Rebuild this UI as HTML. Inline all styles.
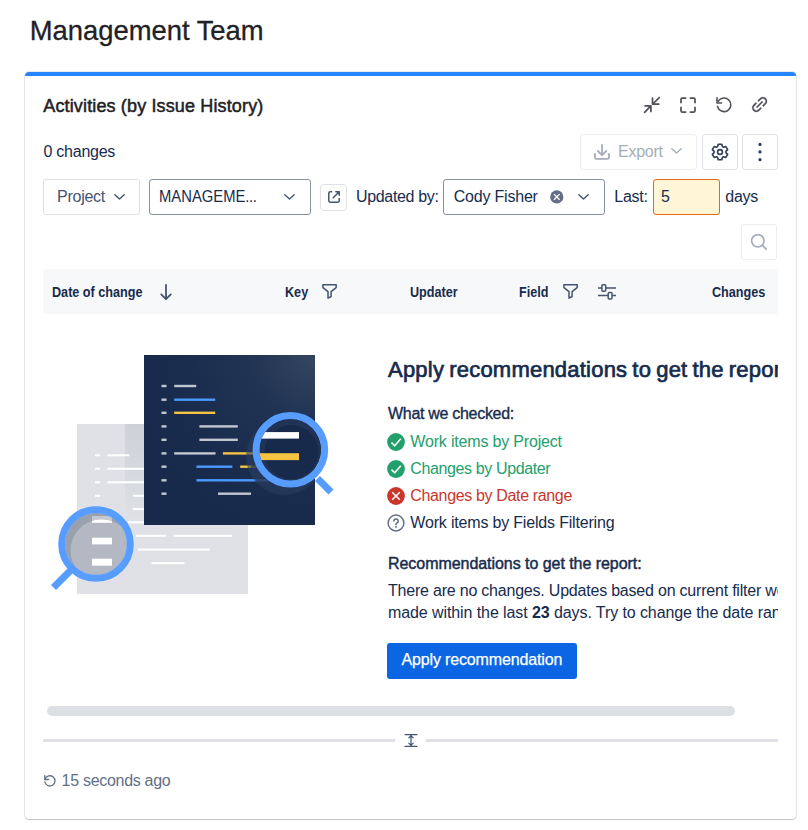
<!DOCTYPE html>
<html><head><meta charset="utf-8">
<style>
*{margin:0;padding:0;box-sizing:border-box}
html,body{width:808px;height:830px;background:#fff;overflow:hidden;font-family:"Liberation Sans",sans-serif;color:#172B4D}
.a{position:absolute;white-space:nowrap;line-height:1}
.card{position:absolute;left:25px;top:72px;width:771px;height:747px;border-radius:4px;background:#fff;
 box-shadow:0 0 0 1px rgba(0,0,0,.085),0 1px 1px rgba(0,0,0,.16)}
.topbar{position:absolute;left:25px;top:72px;width:771px;height:4px;background:#2684FF;border-radius:4px 4px 0 0}
.btn{position:absolute;border:1px solid #DFE1E6;border-radius:3px;background:#fff}
.t16{font-size:16px;letter-spacing:-0.25px}
.med{-webkit-text-stroke:0.35px currentColor}
.th{font-size:13.8px;font-weight:bold;transform:scaleX(.915);transform-origin:0 0;top:286.4px}
.h22{-webkit-text-stroke:0.7px currentColor}
svg{position:absolute;overflow:visible}
</style></head><body>

<div class="a" style="left:29.7px;top:17.2px;font-size:27.4px;color:#1f2126;-webkit-text-stroke:0.3px #1f2126">Management Team</div>

<div class="card"></div>
<div class="topbar"></div>

<div class="a" style="left:43.3px;top:97.1px;font-size:18px;color:#1f2126;letter-spacing:0.14px;-webkit-text-stroke:0.5px #1f2126">Activities (by Issue History)</div>

<!-- header icons -->
<svg style="left:644px;top:97px" width="16" height="16" viewBox="0 0 16 16" fill="none" stroke="#505258" stroke-width="1.75" stroke-linecap="round" stroke-linejoin="round">
 <path d="M15.2 0.6L9.3 6.5M8.5 1V7H14.8"/>
 <path d="M0.6 15.3L6.3 9.4M1.1 8.9H6.9V14.6"/>
</svg>
<svg style="left:680px;top:97px" width="16" height="16" viewBox="0 0 16 16" fill="none" stroke="#505258" stroke-width="1.75" stroke-linecap="round" stroke-linejoin="round">
 <path d="M1 5.6V2.2Q1 1 2.2 1H5.6M10.4 1H13.8Q15 1 15 2.2V5.6M15 10.4V13.8Q15 15 13.8 15H10.4M5.6 15H2.2Q1 15 1 13.8V10.4"/>
</svg>
<svg style="left:716px;top:97px" width="16" height="16" viewBox="0 0 16 16" fill="none" stroke="#505258" stroke-width="1.6" stroke-linecap="round" stroke-linejoin="round">
 <path d="M2.16 4.4A6.8 6.8 0 1 1 1.48 9.56"/>
 <path d="M1 0.8V6H5.5"/>
</svg>
<svg style="left:752px;top:97px" width="16" height="16" viewBox="0 0 16 16" fill="#505258" stroke="#505258" stroke-width="0.15">
 <path transform="translate(7.6 7.5) scale(1.08) translate(-8 -8)" d="M8.22 2.22a3.932 3.932 0 1 1 5.56 5.56l-2.25 2.25-1.06-1.06 2.25-2.25a2.432 2.432 0 0 0-3.44-3.44L7.03 5.53 5.97 4.47zm3.06 3.56-5.5 5.5-1.06-1.06 5.5-5.5zM2.22 8.22l2.25-2.25 1.06 1.06-2.25 2.25a2.432 2.432 0 0 0 3.44 3.44l2.25-2.25 1.06 1.06-2.25 2.25a3.932 3.932 0 1 1-5.56-5.56"/>
</svg>

<div class="a t16" style="left:43.5px;top:144.1px">0 changes</div>

<!-- export / gear / kebab -->
<div class="btn" style="left:580px;top:134px;width:117px;height:36px;border-color:#EBECF0"></div>
<svg style="left:594px;top:144px" width="16" height="16" viewBox="0 0 16 16" fill="none" stroke="#A5ADBA" stroke-width="1.8" stroke-linecap="round" stroke-linejoin="round">
 <path d="M8 0.8V11.2M3.8 7L8 11.2L12.2 7"/>
 <path d="M1 9.8V13.2Q1 14.8 2.6 14.8H13.4Q15 14.8 15 13.2V9.8"/>
</svg>
<div class="a t16" style="left:618px;top:143.8px;color:#A5ADBA">Export</div>
<svg style="left:671px;top:148px" width="11" height="6" viewBox="0 0 11 6" fill="none" stroke="#A5ADBA" stroke-width="1.4" stroke-linecap="round" stroke-linejoin="round"><path d="M0.8 0.8L5.5 5L10.2 0.8"/></svg>

<div class="btn" style="left:702px;top:134px;width:36px;height:36px"></div>
<svg style="left:710.9px;top:142.9px" width="18" height="18" viewBox="0 0 18 18" fill="none" stroke="#2C3E5D" stroke-width="1.6" stroke-linejoin="round">
 <path d="M6.60 3.61 L7.20 1.21 L10.80 1.21 L11.40 3.61 L12.47 4.23 L14.85 3.54 L16.65 6.66 L14.87 8.38 L14.87 9.62 L16.65 11.34 L14.85 14.46 L12.47 13.77 L11.40 14.39 L10.80 16.79 L7.20 16.79 L6.60 14.39 L5.53 13.77 L3.15 14.46 L1.35 11.34 L3.13 9.62 L3.13 8.38 L1.35 6.66 L3.15 3.54 L5.53 4.23Z"/>
 <circle cx="9" cy="9" r="2.4"/>
</svg>
<div class="btn" style="left:742px;top:134px;width:36px;height:36px"></div>
<svg style="left:757px;top:142px" width="6" height="20" viewBox="0 0 6 20" fill="#2C3E5D">
 <circle cx="3" cy="2.4" r="1.6"/><circle cx="3" cy="9.9" r="1.6"/><circle cx="3" cy="17.7" r="1.6"/>
</svg>

<!-- filters row -->
<div class="btn" style="left:43px;top:179px;width:97px;height:36px"></div>
<div class="a t16" style="left:57px;top:188.7px;color:#44546F">Project</div>
<svg style="left:114px;top:194px" width="11" height="6" viewBox="0 0 11 6" fill="none" stroke="#44546F" stroke-width="1.4" stroke-linecap="round" stroke-linejoin="round"><path d="M0.8 0.8L5.5 5L10.2 0.8"/></svg>

<div class="btn" style="left:149px;top:179px;width:162px;height:36px;border-color:#8590A2"></div>
<div class="a t16" style="left:159.3px;top:188.7px;letter-spacing:0;transform:scaleX(0.925);transform-origin:0 0">MANAGEME<span style="letter-spacing:-0.5px">...</span></div>
<svg style="left:284.3px;top:194px" width="11" height="6" viewBox="0 0 11 6" fill="none" stroke="#44546F" stroke-width="1.4" stroke-linecap="round" stroke-linejoin="round"><path d="M0.8 0.8L5.5 5L10.2 0.8"/></svg>

<div class="btn" style="left:320px;top:184px;width:27px;height:27px;border-radius:4px"></div>
<svg style="left:328px;top:191px" width="12" height="12" viewBox="0 0 12 12" fill="none" stroke="#44546F" stroke-width="1.5" stroke-linecap="round" stroke-linejoin="round">
 <path d="M3.6 0.8H2.2Q0.8 0.8 0.8 2.2V9.8Q0.8 11.2 2.2 11.2H9.8Q11.2 11.2 11.2 9.8V7.5"/>
 <path d="M5.2 6.8L11.2 0.8M7.8 0.8H11.2V4.2"/>
</svg>

<div class="a t16" style="left:356px;top:188.7px;letter-spacing:-0.33px">Updated by:</div>

<div class="btn" style="left:443px;top:179px;width:162px;height:36px;border-color:#8590A2"></div>
<div class="a t16" style="left:453.7px;top:188.7px;letter-spacing:-0.2px">Cody Fisher</div>
<svg style="left:550px;top:190px" width="14" height="14" viewBox="0 0 14 14">
 <circle cx="6.8" cy="6.9" r="6.6" fill="#626F86"/>
 <path d="M4 4.1L9.6 9.7M9.6 4.1L4 9.7" stroke="#fff" stroke-width="1.3"/>
</svg>
<svg style="left:578px;top:194px" width="11" height="6" viewBox="0 0 11 6" fill="none" stroke="#44546F" stroke-width="1.4" stroke-linecap="round" stroke-linejoin="round"><path d="M0.8 0.8L5.5 5L10.2 0.8"/></svg>

<div class="a t16" style="left:614.3px;top:188.7px">Last:</div>
<div class="btn" style="left:653px;top:179px;width:67px;height:36px;border-color:#E56910;background:#FFF6D8"></div>
<div class="a t16" style="left:661px;top:188.7px">5</div>
<div class="a t16" style="left:725.3px;top:188.7px">days</div>

<div class="btn" style="left:741px;top:224px;width:36px;height:36px;border-color:#EDEEF1"></div>
<svg style="left:750px;top:233px" width="18" height="18" viewBox="0 0 18 18" fill="none" stroke="#A5ADBA" stroke-width="1.7" stroke-linecap="round">
 <circle cx="7.8" cy="7.8" r="6.2"/><path d="M12.3 12.3L16.2 16.2"/>
</svg>

<!-- table header -->
<div style="position:absolute;left:43px;top:269px;width:735px;height:45px;background:#F7F8F9;border-radius:3px"></div>
<div class="a th" style="left:52.4px">Date of change</div>
<svg style="left:159px;top:283px" width="14" height="18" viewBox="0 0 14 18" fill="none" stroke="#44546F" stroke-width="1.8" stroke-linecap="round" stroke-linejoin="round">
 <path d="M7 1.9V16.2M2.2 11.4L7 16.2L11.8 11.4"/>
</svg>
<div class="a th" style="left:285px">Key</div>
<svg style="left:322px;top:284px" width="15" height="15" viewBox="0 0 15 15" fill="none" stroke="#44546F" stroke-width="1.5" stroke-linejoin="round">
 <path d="M0.9 0.8H14.2V3.2Q14.2 3.6 13.8 3.9L9.1 7.7V12.5L6 14.2V7.7L1.3 3.9Q0.9 3.6 0.9 3.2Z"/>
</svg>
<div class="a th" style="left:410px">Updater</div>
<div class="a th" style="left:519.3px">Field</div>
<svg style="left:563px;top:284px" width="15" height="15" viewBox="0 0 15 15" fill="none" stroke="#44546F" stroke-width="1.5" stroke-linejoin="round">
 <path d="M0.9 0.8H14.2V3.2Q14.2 3.6 13.8 3.9L9.1 7.7V12.5L6 14.2V7.7L1.3 3.9Q0.9 3.6 0.9 3.2Z"/>
</svg>
<svg style="left:598px;top:284px" width="18" height="16" viewBox="0 0 18 16" fill="none" stroke="#44546F" stroke-width="1.5">
 <path d="M0 4H3.9M7.7 4H18M0 11.6H10.2M14 11.6H18"/>
 <rect x="3.9" y="0.7" width="3.8" height="6.6" rx="1"/>
 <rect x="10.2" y="8.5" width="3.8" height="6.6" rx="1"/>
</svg>
<div class="a th" style="left:711.7px">Changes</div>

<!-- illustration -->
<svg style="left:0;top:0" width="808" height="830" viewBox="0 0 808 830">
 <defs>
  <radialGradient id="dg" cx="1" cy="0" r="1.05">
   <stop offset="0" stop-color="#34465F"/><stop offset="0.35" stop-color="#223454"/><stop offset="0.7" stop-color="#1B2D4E"/><stop offset="1" stop-color="#182A4B"/>
  </radialGradient>
  <linearGradient id="sh" x1="0" y1="0" x2="0" y2="1">
   <stop offset="0" stop-color="#CDD1D8"/><stop offset="1" stop-color="#DFE1E6"/>
  </linearGradient>
  <clipPath id="lens1"><circle cx="290.4" cy="449.7" r="31"/></clipPath>
  <clipPath id="lens2"><circle cx="96" cy="544" r="31"/></clipPath>
 </defs>
 <!-- gray sheet -->
 <rect x="77" y="424" width="171" height="170" fill="#DFE1E6"/>
 <rect x="125" y="424" width="19" height="100" fill="url(#sh)"/>
 <g fill="#fff">
  <rect x="95" y="454.3" width="5" height="2"/><rect x="107.4" y="454.3" width="22" height="2"/>
  <rect x="95" y="467.8" width="5" height="2"/><rect x="107.4" y="467.8" width="37" height="2"/>
  <rect x="95" y="481.3" width="5" height="2"/><rect x="107.4" y="481.3" width="37" height="2"/>
  <rect x="95" y="494.8" width="5" height="2"/><rect x="132.8" y="494.8" width="12" height="2"/>
  <rect x="132.8" y="508.1" width="12" height="2"/>
  <rect x="128" y="521.3" width="16" height="2"/>
  <rect x="136" y="534.8" width="30" height="2"/><rect x="173.6" y="534.8" width="58.5" height="2"/>
  <rect x="138" y="548.6" width="71.5" height="2"/>
  <rect x="151.5" y="562.1" width="33" height="2"/>
 </g>
 <!-- dark sheet -->
 <rect x="144" y="355" width="171" height="170" fill="url(#dg)"/>
  <g>
  <rect x="161.5" y="384.8" width="5" height="2.4" fill="#C1C7D0"/><rect x="174.2" y="384.8" width="22" height="2.4" fill="#C1C7D0"/>
  <rect x="161.5" y="398.5" width="5" height="2.4" fill="#C1C7D0"/><rect x="174.2" y="398.5" width="41" height="2.4" fill="#4C9AFF"/>
  <rect x="161.5" y="411.6" width="5" height="2.4" fill="#C1C7D0"/><rect x="174.2" y="411.6" width="41" height="2.4" fill="#F6C342"/>
  <rect x="161.5" y="425.2" width="5" height="2.4" fill="#C1C7D0"/><rect x="199.4" y="425.2" width="38.4" height="2.4" fill="#C1C7D0"/>
  <rect x="161.5" y="438.6" width="5" height="2.4" fill="#C1C7D0"/><rect x="199.4" y="438.6" width="38.4" height="2.4" fill="#C1C7D0"/>
  <rect x="161.5" y="452.2" width="5" height="2.4" fill="#C1C7D0"/><rect x="174.2" y="452.2" width="41.3" height="2.4" fill="#C1C7D0"/><rect x="222.9" y="452.2" width="32" height="2.4" fill="#F6C342"/>
  <rect x="161.5" y="465.5" width="5" height="2.4" fill="#C1C7D0"/><rect x="196.4" y="465.5" width="36" height="2.4" fill="#4C9AFF"/><rect x="240.2" y="465.5" width="11.2" height="2.4" fill="#F6C342"/><rect x="251.4" y="465.5" width="12" height="2.4" fill="#8D7A45" opacity="0.7"/>
  <rect x="161.5" y="479.1" width="5" height="2.4" fill="#C1C7D0"/><rect x="196.4" y="479.1" width="60" height="2.4" fill="#4C9AFF"/><rect x="256.4" y="479.1" width="12" height="2.4" fill="#4A6FA8" opacity="0.7"/>
  <rect x="161.5" y="492.5" width="5" height="2.4" fill="#C1C7D0"/><rect x="218" y="492.5" width="33" height="2.4" fill="#C1C7D0"/>
 </g>
 <!-- right magnifier -->
 <clipPath id="dsq"><rect x="144" y="355" width="171" height="170"/></clipPath>
 <circle cx="284.5" cy="456.5" r="38.5" fill="#2B3E61" opacity="0.6" clip-path="url(#dsq)"/>
 <g clip-path="url(#lens1)">
  <rect x="250" y="410" width="80" height="80" fill="#203255"/>
  <circle cx="291.5" cy="452" r="27" fill="#182A4B"/>
  <rect x="258" y="432.1" width="41" height="6.5" fill="#fff"/>
  <rect x="255" y="453.2" width="44" height="6.9" fill="#F6C342"/>
 </g>
 <circle cx="290.4" cy="449.7" r="34.3" fill="none" stroke="#579DFF" stroke-width="7"/>
 <path d="M317.5 478.5L331 492" stroke="#579DFF" stroke-width="7"/>
 <!-- left magnifier -->
 <g clip-path="url(#lens2)">
  <rect x="60" y="508" width="75" height="75" fill="#B3B8C2"/>
  <rect x="92" y="516" width="20" height="6.8" fill="#fff"/>
  <rect x="92" y="537.7" width="20" height="6.7" fill="#fff"/>
  <rect x="92" y="558.7" width="20" height="7" fill="#fff"/>
  <path fill-rule="evenodd" fill="#7D8594" opacity="0.45" d="M55 500H140V590H55Z M132.5 550.5A31 31 0 1 0 70.5 550.5A31 31 0 1 0 132.5 550.5Z"/>
 </g>
 <circle cx="96" cy="544" r="34.3" fill="none" stroke="#579DFF" stroke-width="7"/>
 <path d="M71 570L53.5 587.5" stroke="#579DFF" stroke-width="7"/>
</svg>

<!-- right panel -->
<div style="position:absolute;left:386px;top:340px;width:392px;height:350px;overflow:hidden">
 <div class="a h22" style="left:2px;top:18.6px;font-size:22px;letter-spacing:0.22px;word-spacing:-1.3px">Apply recommendations to get the report</div>
 <div class="a t16 med" style="left:2px;top:65.9px;letter-spacing:-0.3px">What we checked:</div>
 <div class="a t16" style="left:24.3px;top:93.8px;color:#22A06B;letter-spacing:-0.18px">Work items by Project</div>
 <div class="a t16" style="left:24.3px;top:121.2px;color:#22A06B;letter-spacing:-0.38px">Changes by Updater</div>
 <div class="a t16" style="left:24.3px;top:148.1px;color:#C9372C;letter-spacing:-0.35px">Changes by Date range</div>
 <div class="a t16" style="left:24.3px;top:174.5px;letter-spacing:-0.18px">Work items by Fields Filtering</div>
 <div class="a t16 med" style="left:2px;top:215.5px;letter-spacing:-0.05px;-webkit-text-stroke:0.45px currentColor">Recommendations to get the report:</div>
 <div class="a t16" style="left:2px;top:242.7px;letter-spacing:-0.21px">There are no changes. Updates based on current filter were</div>
 <div class="a t16" style="left:2px;top:264.5px;letter-spacing:-0.09px">made within the last <b>23</b> days. Try to change the date range</div>
</div>
<svg style="left:387px;top:433px" width="18" height="18" viewBox="0 0 18 18">
 <circle cx="9" cy="9" r="8.9" fill="#22A06B"/><path d="M4.5 9.6L7.7 12.8L13.8 5.8" fill="none" stroke="#fff" stroke-width="1.6" stroke-linejoin="round"/>
</svg>
<svg style="left:387px;top:460px" width="18" height="18" viewBox="0 0 18 18">
 <circle cx="9" cy="9" r="8.9" fill="#22A06B"/><path d="M4.5 9.6L7.7 12.8L13.8 5.8" fill="none" stroke="#fff" stroke-width="1.6" stroke-linejoin="round"/>
</svg>
<svg style="left:387px;top:487px" width="18" height="18" viewBox="0 0 18 18">
 <circle cx="9" cy="9" r="8.9" fill="#C9372C"/><path d="M5.2 5.2L12.8 12.8M12.8 5.2L5.2 12.8" fill="none" stroke="#fff" stroke-width="1.5"/>
</svg>
<svg style="left:387px;top:514px" width="18" height="18" viewBox="0 0 18 18">
 <circle cx="9" cy="9" r="7.9" fill="none" stroke="#626F86" stroke-width="1.5"/>
 <path d="M6.8 7A2.2 2.2 0 1 1 9.6 9.2Q9 9.5 9 10.4V10.8" fill="none" stroke="#626F86" stroke-width="1.5" stroke-linecap="round"/>
 <circle cx="9" cy="13" r="0.9" fill="#626F86"/>
</svg>

<div style="position:absolute;left:387px;top:643px;width:190px;height:36px;background:#0C66E4;border-radius:3px"></div>
<div class="a t16 med" style="left:401.5px;top:652px;color:#fff;-webkit-text-stroke:0.25px #fff;letter-spacing:-0.15px">Apply recommendation</div>

<!-- scrollbar + divider -->
<div style="position:absolute;left:47px;top:706px;width:688px;height:10px;background:#DCDFE4;border-radius:5px"></div>
<div style="position:absolute;left:43px;top:739px;width:352px;height:3px;background:#DFE1E6"></div>
<div style="position:absolute;left:426px;top:739px;width:352px;height:3px;background:#DFE1E6"></div>
<svg style="left:405px;top:734px" width="12" height="13" viewBox="0 0 12 13" fill="none" stroke="#44546F" stroke-width="1.2" stroke-linecap="round" stroke-linejoin="round">
 <path d="M0 0.6H12M0 12.4H12M6 1.6V11.4M3.8 3.8L6 1.6L8.2 3.8M3.8 9.2L6 11.4L8.2 9.2"/>
</svg>

<!-- footer -->
<svg style="left:44px;top:774.5px" width="12" height="12" viewBox="0 0 16 16" fill="none" stroke="#626F86" stroke-width="1.75" stroke-linecap="round" stroke-linejoin="round">
 <path d="M1.5 5.5A6.8 6.8 0 1 1 1.2 9"/>
 <path d="M1 0.8V6H6.2"/>
</svg>
<div class="a t16" style="left:61.6px;top:773.2px;color:#626F86;letter-spacing:-0.3px">15 seconds ago</div>

</body></html>
